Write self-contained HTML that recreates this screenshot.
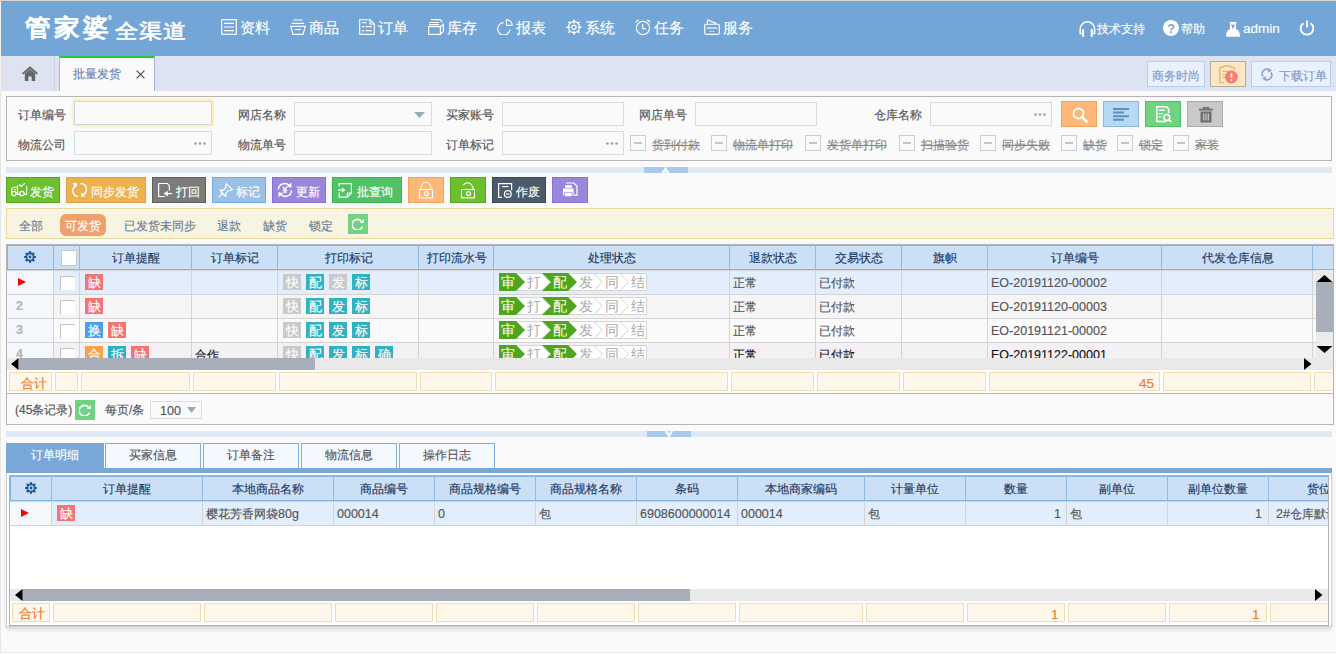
<!DOCTYPE html>
<html><head><meta charset="utf-8">
<style>
*{box-sizing:border-box}
html,body{margin:0;padding:0}
body{width:1336px;height:654px;overflow:hidden;position:relative;background:#fafafa;font-family:"Liberation Sans",sans-serif;font-size:12px;color:#555;-webkit-text-stroke-width:0.15px}
.a{position:absolute}
svg{display:block}
.t{position:absolute;white-space:nowrap;line-height:1}
/* header */
#hdr{left:0;top:0;width:1336px;height:56px;background:#73a6d7}
.nav{color:#fff;font-size:15px}
.hr{color:#fff;font-size:12px}
/* tabbar */
#tabbar{left:0;top:56px;width:1336px;height:35px;background:#dde3f0}
.rbtn{position:absolute;top:61px;height:26px;border:1px solid #b9cdf0;background:#e9f1fd;color:#7f98c9;font-size:12.5px}
/* search */
.box{position:absolute;border:1px solid #b5b5b5}
.lbl{position:absolute;font-size:12px;color:#555;line-height:1;white-space:nowrap}
.inp{position:absolute;height:24px;border:1px solid #d3dde2;background:#fafafa}
.dots{position:absolute;right:5px;top:10px;width:12px;height:3px}
.cb{position:absolute;width:16px;height:16px;border:1px solid #c4d0d4;background:#fafafa}
.cb:after{content:"";position:absolute;left:3px;top:6px;width:8px;height:2px;background:#bccacf}
.cbl{position:absolute;font-size:12px;color:#888;text-decoration:line-through;line-height:1;white-space:nowrap}
.sbtn{position:absolute;top:101px;width:36px;height:26px}
/* toolbar */
.tb{position:absolute;top:177px;height:26px;color:#fff;font-size:12.5px}
.tb .t{top:7px}

.hd{position:absolute;font-size:12px;color:#1f3b63;line-height:1;white-space:nowrap;text-align:center}
.tag{position:absolute;width:18px;height:16px;color:#fff;font-size:13px;line-height:17px;text-align:center;overflow:hidden}
.rcb{position:absolute;width:15px;height:14px;background:#fff;border-top:1px solid #c4c4c4;border-left:1px solid #c4c4c4}
.ct{position:absolute;font-size:12px;color:#555;line-height:1;white-space:nowrap}
.sc{position:absolute;height:19px;background:#fff7ea;border:1px solid #f0dbb2}
</style></head><body>
<!-- left viewport edge -->
<div class="a" style="left:0;top:56px;width:1px;height:598px;background:#e6e6e6"></div>
<div class="a" style="left:0;top:652px;width:1336px;height:1px;background:#e6e6e6"></div><div class="a" style="left:0;top:653px;width:1336px;height:1px;background:#fff"></div>

<!-- HEADER -->
<div id="hdr" class="a">
  <div class="t" style="left:25px;top:16px;font-size:25px;font-weight:bold;color:#fff;letter-spacing:4px;transform:scaleY(.94);transform-origin:0 0">管家婆</div>
  <div class="t" style="left:108px;top:16px;font-size:5px;color:#fff">®</div>
  <div class="t" style="left:115px;top:22px;font-size:23px;color:#fff;letter-spacing:1px;-webkit-text-stroke:0.7px #fff;transform:scaleY(.86);transform-origin:0 0">全渠道</div>
<svg class="a" style="left:221px;top:19px" width="16" height="16" viewBox="0 0 16 16"><g fill="none" stroke="#fff" stroke-width="1.15"><rect x="0.7" y="0.7" width="14.6" height="14.6"/><path d="M3 4.3H13M3 8H13M3 11.6H13"/></g></svg>
<div class="t nav" style="left:240px;top:20px">资料</div>
<svg class="a" style="left:290px;top:19px" width="16" height="16" viewBox="0 0 16 16"><g fill="none" stroke="#fff" stroke-width="1.15"><path d="M3.2 1H12.6M1.6 4.4H14.2"/><path d="M0.7 7.3H15.3L13 15.3H3Z"/><path d="M4.8 10.5H11"/></g></svg>
<div class="t nav" style="left:309px;top:20px">商品</div>
<svg class="a" style="left:359px;top:19px" width="16" height="16" viewBox="0 0 16 16"><g fill="none" stroke="#fff" stroke-width="1.15"><path d="M0.7 0.7H11L15.3 5V15.3H0.7Z"/><path d="M11 0.7V5H15.3"/><path d="M3 3.6H7.6M3 7.6H5.3M6.6 7.6H12.8M3 11.6H5.3M6.6 11.6H12.8"/></g></svg>
<div class="t nav" style="left:378px;top:20px">订单</div>
<svg class="a" style="left:428px;top:19px" width="16" height="16" viewBox="0 0 16 16"><g fill="none" stroke="#fff" stroke-width="1.2"><path d="M3 0.6H11.2Q13.8 0.6 13.8 3.6M1 3.5H11M1 5.6H11"/><path d="M0.6 7.6H12.4V15.4H0.6Z"/><path d="M12.4 7.6L15.4 5.4V12.2L12.4 15.4"/></g></svg>
<div class="t nav" style="left:447px;top:20px">库存</div>
<svg class="a" style="left:497px;top:19px" width="16" height="16" viewBox="0 0 16 16"><g fill="none" stroke="#fff" stroke-width="1.15"><path d="M6.5 3.6A6.2 6.2 0 1 0 13 10.4"/><path d="M9.5 0.9A5.4 5.4 0 0 1 15.2 6.4H9.5Z"/></g></svg>
<div class="t nav" style="left:516px;top:20px">报表</div>
<svg class="a" style="left:566px;top:19px" width="16" height="16" viewBox="0 0 16 16"><g fill="none" stroke="#fff" stroke-width="1.15"><circle cx="8" cy="8.2" r="5.6"/><circle cx="8" cy="8.2" r="2.1"/><path d="M8 0.6V4.4M8 12V15.8M0.4 8.2H4.2M11.8 8.2H15.6M2.5 2.7L4.3 4.5M11.7 11.9L13.5 13.7M13.5 2.7L11.7 4.5M4.3 11.9L2.5 13.7" stroke-width="1.5"/></g></svg>
<div class="t nav" style="left:585px;top:20px">系统</div>
<svg class="a" style="left:635px;top:19px" width="16" height="16" viewBox="0 0 16 16"><g fill="none" stroke="#fff" stroke-width="1.15"><circle cx="8" cy="9" r="6.6"/><path d="M7.7 5V9.6H11"/><path d="M0.8 3.6Q1.6 1.2 4 1.1M15.2 3.6Q14.4 1.2 12 1.1"/></g></svg>
<div class="t nav" style="left:654px;top:20px">任务</div>
<svg class="a" style="left:704px;top:19px" width="16" height="16" viewBox="0 0 16 16"><g fill="none" stroke="#fff" stroke-width="1.15"><rect x="0.7" y="5.2" width="14.6" height="10.1" rx="1.2"/><path d="M3.2 5.2L3.8 1L12.6 4.6"/><path d="M2.6 9H13.4"/><path d="M6.2 12.5H7.4M8.8 12.5H10"/></g></svg>
<div class="t nav" style="left:723px;top:20px">服务</div>
<svg class="a" style="left:1079px;top:20px" width="17" height="17" viewBox="0 0 17 17"><path d="M1.2 12.6V9A7.2 7.2 0 0 1 15.6 9V12.6" fill="none" stroke="#fff" stroke-width="1.5"/><path d="M1.2 11.6V13.7H3.4M15.6 11.6V13.7H13.4" fill="none" stroke="#fff" stroke-width="1.3"/><rect x="3" y="9.2" width="2.1" height="7.6" fill="#fff"/><rect x="11.7" y="9.2" width="2.1" height="7.6" fill="#fff"/></svg>
<div class="t hr" style="left:1097px;top:23px">技术支持</div>
<svg class="a" style="left:1163px;top:20px" width="16" height="16" viewBox="0 0 16 16"><circle cx="8" cy="8" r="8" fill="#fff"/><text x="8" y="12.6" text-anchor="middle" font-family="Liberation Sans" font-weight="bold" font-size="12.5" fill="#73a6d7">?</text></svg>
<div class="t hr" style="left:1181px;top:23px">帮助</div>
<svg class="a" style="left:1225px;top:21px" width="16" height="16" viewBox="0 0 16 16"><rect x="4.8" y="0.9" width="6.4" height="2.8" fill="#fff"/><path d="M1 15.8C1 11 2.6 9 5 8.2V3.6H6L8 8.4L10 3.6H11V8.2C13.4 9 15 11 15 15.8Z" fill="#fff"/></svg>
<div class="t" style="left:1243px;top:22px;color:#fff;font-size:13.5px">admin</div>
<svg class="a" style="left:1299px;top:20px" width="16" height="16" viewBox="0 0 16 16"><g fill="none" stroke="#fff" stroke-width="1.8"><path d="M4.4 3.2A6.3 6.3 0 1 0 11.6 3.2"/><path d="M8 0.5V7.5"/></g></svg>
</div>
<!-- TABBAR -->
<div id="tabbar" class="a">
  <svg class="a" style="left:22px;top:10px" width="16" height="15" viewBox="0 0 16 15"><path d="M8 0.3L16 7.3L14.7 8.6L8 2.8L1.3 8.6L0 7.3Z" fill="#666"/><path d="M2.8 7.6L8 3.2L13.2 7.6V15H9.6V10.6H6.4V15H2.8Z" fill="#666"/></svg>
  <div class="a" style="left:54px;top:0;width:1px;height:35px;background:#ccd2e0"></div>
  <div class="a" style="left:59px;top:0;width:96px;height:35px;background:#fafafa;border-left:1px solid #a3b6d9;border-right:1px solid #a3b6d9;border-top:2px solid #2bc53c"></div>
  <div class="t" style="left:73px;top:12px;color:#6b80b8;font-size:12px">批量发货</div>
  <svg class="a" style="left:136px;top:14px" width="9" height="9" viewBox="0 0 9 9"><path d="M0.6 0.6L8.4 8.4M8.4 0.6L0.6 8.4" stroke="#555" stroke-width="1.3"/></svg>
</div>
<div class="rbtn" style="left:1147px;width:58px"><div class="t" style="left:4px;top:8px;font-size:12px">商务时尚</div></div>
<div class="rbtn" style="left:1210px;width:36px;background:#fde6c2;border-color:#b0aba0">
  <svg class="a" style="left:8px;top:3px" width="20" height="19" viewBox="0 0 20 19"><g fill="none" stroke="#e3b56c" stroke-width="1.3"><path d="M5 2.2H2Q0.8 2.2 0.8 3.4V16.4Q0.8 17.6 2 17.6H5M11 2.2H14Q15.2 2.2 15.2 3.4V5"/><path d="M4 1H12M3.6 6.4H11M3.6 9.4H6M3.6 12.4H6"/></g><circle cx="12.4" cy="12" r="6.4" fill="#f77c6e"/><path d="M12.4 8.4V12.6" stroke="#fff" stroke-width="1.8"/><circle cx="12.4" cy="15" r="1" fill="#fff"/></svg>
</div>
<div class="rbtn" style="left:1251px;width:80px">
  <svg class="a" style="left:9px;top:6px" width="12" height="13" viewBox="0 0 12 13"><g fill="none" stroke="#8aa4d6" stroke-width="1.6"><path d="M2 8.5A4.6 4.6 0 0 1 8.5 2.2"/><path d="M10 4.5A4.6 4.6 0 0 1 3.5 10.8"/></g><path d="M7 0L11 2.6L7.4 4.8Z" fill="#8aa4d6"/><path d="M5 13L1 10.4L4.6 8.2Z" fill="#8aa4d6"/></svg>
  <div class="t" style="left:27px;top:8px;font-size:12px">下载订单</div>
</div>
<div class="a" style="left:0;top:0;width:1336px;height:1px;background:#d9d4ce"></div>
<div class="a" style="left:0;top:1px;width:1px;height:90px;background:#f3eee7"></div>
<!-- SEARCH -->
<div class="box" style="left:6px;top:96px;width:1326px;height:65px"></div>
<div class="lbl" style="left:18px;top:109px">订单编号</div>
<div class="lbl" style="left:238px;top:109px">网店名称</div>
<div class="lbl" style="left:446px;top:109px">买家账号</div>
<div class="lbl" style="left:639px;top:109px">网店单号</div>
<div class="lbl" style="left:874px;top:109px">仓库名称</div>
<div class="lbl" style="left:18px;top:139px">物流公司</div>
<div class="lbl" style="left:238px;top:139px">物流单号</div>
<div class="lbl" style="left:446px;top:139px">订单标记</div>
<div class="inp" style="left:74px;top:101px;width:138px;border-color:#cbd9e6;box-shadow:0 0 3px 1px #fde68a"></div>
<div class="inp" style="left:294px;top:102px;width:138px"><svg class="a" style="right:6px;top:9px" width="11" height="6" viewBox="0 0 11 6"><path d="M0 0H11L5.5 6Z" fill="#97adb5"/></svg></div>
<div class="inp" style="left:502px;top:102px;width:122px"></div>
<div class="inp" style="left:695px;top:102px;width:122px"></div>
<div class="inp" style="left:930px;top:102px;width:122px"><svg class="dots" viewBox="0 0 12 3"><circle cx="1.5" cy="1.5" r="1.3" fill="#8fa3ad"/><circle cx="6" cy="1.5" r="1.3" fill="#8fa3ad"/><circle cx="10.5" cy="1.5" r="1.3" fill="#8fa3ad"/></svg></div>
<div class="inp" style="left:74px;top:131px;width:138px"><svg class="dots" viewBox="0 0 12 3"><circle cx="1.5" cy="1.5" r="1.3" fill="#8fa3ad"/><circle cx="6" cy="1.5" r="1.3" fill="#8fa3ad"/><circle cx="10.5" cy="1.5" r="1.3" fill="#8fa3ad"/></svg></div>
<div class="inp" style="left:294px;top:131px;width:138px"></div>
<div class="inp" style="left:502px;top:131px;width:122px"><svg class="dots" viewBox="0 0 12 3"><circle cx="1.5" cy="1.5" r="1.3" fill="#8fa3ad"/><circle cx="6" cy="1.5" r="1.3" fill="#8fa3ad"/><circle cx="10.5" cy="1.5" r="1.3" fill="#8fa3ad"/></svg></div>
<div class="cb" style="left:630px;top:135px"></div><div class="cbl" style="left:652px;top:139px">货到付款</div>
<div class="cb" style="left:711px;top:135px"></div><div class="cbl" style="left:733px;top:139px">物流单打印</div>
<div class="cb" style="left:805px;top:135px"></div><div class="cbl" style="left:827px;top:139px">发货单打印</div>
<div class="cb" style="left:899px;top:135px"></div><div class="cbl" style="left:921px;top:139px">扫描验货</div>
<div class="cb" style="left:980px;top:135px"></div><div class="cbl" style="left:1002px;top:139px">同步失败</div>
<div class="cb" style="left:1061px;top:135px"></div><div class="cbl" style="left:1083px;top:139px">缺货</div>
<div class="cb" style="left:1117px;top:135px"></div><div class="cbl" style="left:1139px;top:139px">锁定</div>
<div class="cb" style="left:1173px;top:135px"></div><div class="cbl" style="left:1195px;top:139px">家装</div>
<div class="sbtn" style="left:1061px;background:#fdb878;border:1px solid #f2a35d"><svg class="a" style="left:10px;top:5px" width="16" height="16" viewBox="0 0 16 16"><circle cx="6.5" cy="6.5" r="5" fill="none" stroke="#fff" stroke-width="1.8"/><path d="M10 10L14.5 14.5" stroke="#fff" stroke-width="2.6" stroke-linecap="round"/></svg></div>
<div class="sbtn" style="left:1103px;background:#b9d8f3;border:1px solid #8db6de"><svg class="a" style="left:9px;top:6px" width="17" height="13" viewBox="0 0 17 13"><path d="M0 1H16M0 4.6H11M0 8.2H16M0 11.8H11" stroke="#5b8fc0" stroke-width="2"/></svg></div>
<div class="sbtn" style="left:1145px;background:#70d381;border:1px solid #4fbe62"><svg class="a" style="left:10px;top:4px" width="16" height="17" viewBox="0 0 16 17"><path d="M10.5 15.5H0.8V0.8H10.5L12.6 2.9V7" fill="none" stroke="#fff" stroke-width="1.6"/><path d="M3 4.3H8.8M3 7.6H7M3 10.9H5.4" stroke="#fff" stroke-width="1.4"/><circle cx="10.8" cy="11.5" r="2.9" fill="none" stroke="#fff" stroke-width="1.5"/><path d="M12.8 13.5L15.2 15.9" stroke="#fff" stroke-width="1.8"/></svg></div>
<div class="sbtn" style="left:1187px;background:#c9c9c9;border:1px solid #aaa"><svg class="a" style="left:11px;top:5px" width="14" height="16" viewBox="0 0 14 16"><path d="M0 2.6H14M4.5 2.6V0.8H9.5V2.6" fill="none" stroke="#6f6f6f" stroke-width="1.6"/><path d="M1.5 4.5H12.5V15.5H1.5Z" fill="#6f6f6f"/><path d="M4.7 6.5V13.5M7 6.5V13.5M9.3 6.5V13.5" stroke="#c9c9c9" stroke-width="1.2"/></svg></div>
<div class="a" style="left:6px;top:167px;width:1326px;height:6px;background:#e0eaf6"></div>
<div class="a" style="left:644px;top:167px;width:44px;height:6px;background:#abc9ef"><svg class="a" style="left:18px;top:0" width="7" height="6" viewBox="0 0 7 6"><path d="M0.8 6.2L3.5 2L6.2 6.2" fill="none" stroke="#fff" stroke-width="2.4"/></svg></div>
<!-- TOOLBAR -->
<div class="tb" style="left:6px;width:54px;background:#6cbf2f;border:1px solid #55a820"><svg class="a" style="left:4px;top:5px" width="17" height="15" viewBox="0 0 17 15"><g fill="none" stroke="#fff" stroke-width="1.15"><path d="M0.6 12.2V6.2L2.6 4.2H6.5"/><path d="M3.2 6.6H4.9"/><path d="M6.5 2.2V11"/><circle cx="2.9" cy="10.6" r="2.2"/><circle cx="11" cy="10.6" r="2.2"/><path d="M5 11.4H8.8M13.2 11.4H15.6V3"/><path d="M8.2 1.5L10.2 3.5L13.8 0.3"/></g></svg><div class="t" style="left:23px;top:8px;font-size:12px">发货</div></div>
<div class="tb" style="left:66px;width:80px;background:#eeb150;border:1px solid #e0a142"><svg class="a" style="left:5px;top:5px" width="15" height="15" viewBox="0 0 15 15"><g fill="none" stroke="#fff" stroke-width="1.5"><path d="M3.4 3A5.8 5.8 0 0 0 5.8 13.6"/><path d="M8.4 0.6A5.8 5.8 0 0 1 11.2 11.6"/></g><path d="M0.2 0.2L5 0L4.6 4.6Z" fill="#fff"/><path d="M9.2 9.5L9.2 13.8L13.6 13.6Z" fill="#fff"/></svg><div class="t" style="left:24px;top:8px;font-size:12px">同步发货</div></div>
<div class="tb" style="left:152px;width:54px;background:#7b7b7b;border:1px solid #5e5e5e"><svg class="a" style="left:4px;top:4px" width="16" height="16" viewBox="0 0 16 16"><g fill="none" stroke="#fff" stroke-width="1.2"><path d="M1.6 1.5H10.5L12.4 4.1V8.5"/><path d="M1.6 1.5V14.5H7.9"/><path d="M9.5 11.6H15"/></g><path d="M6.6 11.6L10.8 8.8V14.4Z" fill="#fff"/></svg><div class="t" style="left:23px;top:8px;font-size:12px">打回</div></div>
<div class="tb" style="left:212px;width:54px;background:#9cc0e4;border:1px solid #6eadea"><svg class="a" style="left:5px;top:5px" width="15" height="15" viewBox="0 0 15 15"><g fill="none" stroke="#fff" stroke-width="1.2"><path d="M0.6 14.4L5.4 9.6"/><path d="M8.4 0.8L14.2 6.6L12.6 7.4L10.2 7.6L7.6 10.6L8 13L4.2 10.8L2.4 7L4.6 7.6L7.6 5L7.8 2.6Z"/></g></svg><div class="t" style="left:23px;top:8px;font-size:12px">标记</div></div>
<div class="tb" style="left:272px;width:54px;background:#9b87d9;border:1px solid #8d6edb"><svg class="a" style="left:4px;top:4px" width="16" height="16" viewBox="0 0 16 16"><g fill="none" stroke="#fff" stroke-width="1.4"><path d="M1.4 7.6A6.3 6.3 0 0 1 12 3.2"/><path d="M14.5 8.2A6.3 6.3 0 0 1 3.8 12.6"/></g><path d="M9.6 4.6L14.4 0.6V5.8Z" fill="#fff"/><path d="M6.3 11.2L1.5 15.2V10Z" fill="#fff"/><g fill="none" stroke="#fff" stroke-width="1.2"><path d="M5.8 4.6L8 7.4L10.2 4.6M8 7.4V11.2M5.8 8.2H10.2M5.8 10H10.2"/></g></svg><div class="t" style="left:23px;top:8px;font-size:12px">更新</div></div>
<div class="tb" style="left:332px;width:70px;background:#52c266;border:1px solid #3fb054"><svg class="a" style="left:5px;top:5px" width="15" height="15" viewBox="0 0 15 15"><g fill="none" stroke="#fff" stroke-width="1.2"><path d="M1.2 3.5V0.6H13.4V10L9.4 14.2H1.2V9.5"/><path d="M13.4 10H9.4V14.2"/></g><path d="M0 7H4.8" stroke="#fff" stroke-width="1.3"/><path d="M7.4 7L4 4.6V9.4Z" fill="#fff"/></svg><div class="t" style="left:24px;top:8px;font-size:12px">批查询</div></div>
<div class="tb" style="left:408px;width:36px;background:#fdb879;border:1px solid #f2a35d"><svg class="a" style="left:9px;top:3px" width="17" height="18" viewBox="0 0 17 18"><g fill="none" stroke="#fff" stroke-width="1.1"><path d="M2.8 8.5C3.2 -1.2 12.8 -1.2 13.2 8.5"/><rect x="1.5" y="8.5" width="13" height="8.4"/><circle cx="8.5" cy="12.6" r="2"/></g></svg></div>
<div class="tb" style="left:450px;width:36px;background:#6cbf2f;border:1px solid #55a820"><svg class="a" style="left:9px;top:3px" width="17" height="18" viewBox="0 0 17 18"><g fill="none" stroke="#fff" stroke-width="1.1"><path d="M3.2 4.6C5.6 0.4 12 0.8 13.4 8.5"/><rect x="1.5" y="8.5" width="13" height="8.4"/><circle cx="8.5" cy="12.6" r="2"/></g></svg></div>
<div class="tb" style="left:492px;width:54px;background:#4b5b6b;border:1px solid #3b4855"><svg class="a" style="left:5px;top:5px" width="15" height="15" viewBox="0 0 15 15"><g fill="none" stroke="#fff" stroke-width="1.2"><path d="M4 14.4H0.6V0.6H13.6V7.4"/><path d="M4 3.6H10.6"/><circle cx="9.8" cy="11" r="3.4"/><path d="M8 11H11.6"/></g></svg><div class="t" style="left:23px;top:8px;font-size:12px">作废</div></div>
<div class="tb" style="left:552px;width:36px;background:#9b87d9;border:1px solid #8d6edb"><svg class="a" style="left:9px;top:3px" width="17" height="17" viewBox="0 0 17 17"><path d="M4 2H11.8L15 5V14.2H12" fill="none" stroke="#fff" stroke-width="1.2"/><rect x="3.2" y="4.2" width="6.6" height="2.6" fill="#fff"/><path d="M1 7.4H11.6V14.4H10.4V11H2.2V14.4H1Z" fill="#fff"/><rect x="3" y="11.6" width="6.6" height="3.6" fill="#fff"/></svg></div>
<!-- FILTER -->
<div class="a" style="left:6px;top:208px;width:1328px;height:31px;background:#f7f5e1;border:1px solid #e6d89f"></div>
<div class="t" style="left:19px;top:220px;font-size:12px;color:#6b7c95">全部</div>
<div class="t" style="left:124px;top:220px;font-size:12px;color:#6b7c95">已发货未同步</div>
<div class="t" style="left:217px;top:220px;font-size:12px;color:#6b7c95">退款</div>
<div class="t" style="left:263px;top:220px;font-size:12px;color:#6b7c95">缺货</div>
<div class="t" style="left:309px;top:220px;font-size:12px;color:#6b7c95">锁定</div>
<div class="a" style="left:60px;top:214px;width:46px;height:22px;border-radius:6px;background:#f0a06d"></div>
<div class="t" style="left:65px;top:220px;font-size:12px;color:#fff">可发货</div>
<div class="a" style="left:348px;top:214px;width:20px;height:20px;background:#70d381"><svg class="a" style="left:4px;top:4px" width="12" height="12" viewBox="0 0 12 12"><path d="M9.6 3.4A5.3 5.3 0 1 0 10.4 8.6" fill="none" stroke="#fff" stroke-width="1.6"/><path d="M7.8 4.9H11.9V0.9Z" fill="#fff"/></svg></div>
<!-- GRID -->
<div class="a" style="left:6px;top:244px;width:1328px;height:181px;border:1px solid #b5b5b5;background:#fafafa"></div>
<div class="a" style="left:7px;top:245px;width:1326px;height:25px;background:#cbdff6;border:1px solid #86b4e0;border-right:none"></div>
<div class="a" style="left:53px;top:245px;width:1px;height:24px;background:#8fbae3"></div>
<div class="a" style="left:79px;top:245px;width:1px;height:24px;background:#8fbae3"></div>
<div class="a" style="left:191px;top:245px;width:1px;height:24px;background:#8fbae3"></div>
<div class="a" style="left:277px;top:245px;width:1px;height:24px;background:#8fbae3"></div>
<div class="a" style="left:418px;top:245px;width:1px;height:24px;background:#8fbae3"></div>
<div class="a" style="left:493px;top:245px;width:1px;height:24px;background:#8fbae3"></div>
<div class="a" style="left:729px;top:245px;width:1px;height:24px;background:#8fbae3"></div>
<div class="a" style="left:815px;top:245px;width:1px;height:24px;background:#8fbae3"></div>
<div class="a" style="left:901px;top:245px;width:1px;height:24px;background:#8fbae3"></div>
<div class="a" style="left:987px;top:245px;width:1px;height:24px;background:#8fbae3"></div>
<div class="a" style="left:1161px;top:245px;width:1px;height:24px;background:#8fbae3"></div>
<div class="a" style="left:1312px;top:245px;width:1px;height:24px;background:#8fbae3"></div>
<div class="a" style="left:7px;top:270px;width:1309px;height:24px;background:#e2eefc"></div>
<div class="a" style="left:7px;top:270px;width:46px;height:24px;background:#f4f8fd"></div>
<div class="a" style="left:7px;top:294px;width:1309px;height:24px;background:#f5f5f5"></div>
<div class="a" style="left:7px;top:294px;width:46px;height:24px;background:#f4f8fd"></div>
<div class="a" style="left:7px;top:318px;width:1309px;height:24px;background:#fafafa"></div>
<div class="a" style="left:7px;top:318px;width:46px;height:24px;background:#f4f8fd"></div>
<div class="a" style="left:7px;top:342px;width:1309px;height:16px;background:#f5eff6"></div>
<div class="a" style="left:7px;top:342px;width:46px;height:16px;background:#f4f8fd"></div>
<div class="a" style="left:7px;top:270px;width:1309px;height:1px;background:#d3d3d3"></div>
<div class="a" style="left:7px;top:294px;width:1309px;height:1px;background:#d3d3d3"></div>
<div class="a" style="left:7px;top:318px;width:1309px;height:1px;background:#d3d3d3"></div>
<div class="a" style="left:7px;top:342px;width:1309px;height:1px;background:#d3d3d3"></div>
<div class="a" style="left:53px;top:270px;width:1px;height:88px;background:#d3d3d3"></div>
<div class="a" style="left:79px;top:270px;width:1px;height:88px;background:#d3d3d3"></div>
<div class="a" style="left:191px;top:270px;width:1px;height:88px;background:#d3d3d3"></div>
<div class="a" style="left:277px;top:270px;width:1px;height:88px;background:#d3d3d3"></div>
<div class="a" style="left:418px;top:270px;width:1px;height:88px;background:#d3d3d3"></div>
<div class="a" style="left:493px;top:270px;width:1px;height:88px;background:#d3d3d3"></div>
<div class="a" style="left:729px;top:270px;width:1px;height:88px;background:#d3d3d3"></div>
<div class="a" style="left:815px;top:270px;width:1px;height:88px;background:#d3d3d3"></div>
<div class="a" style="left:901px;top:270px;width:1px;height:88px;background:#d3d3d3"></div>
<div class="a" style="left:987px;top:270px;width:1px;height:88px;background:#d3d3d3"></div>
<div class="a" style="left:1161px;top:270px;width:1px;height:88px;background:#d3d3d3"></div>
<div class="a" style="left:1312px;top:270px;width:1px;height:88px;background:#d3d3d3"></div>
<div class="hd" style="left:80px;top:252px;width:112px">订单提醒</div>
<div class="hd" style="left:192px;top:252px;width:86px">订单标记</div>
<div class="hd" style="left:278px;top:252px;width:141px">打印标记</div>
<div class="hd" style="left:419px;top:252px;width:75px">打印流水号</div>
<div class="hd" style="left:494px;top:252px;width:236px">处理状态</div>
<div class="hd" style="left:730px;top:252px;width:86px">退款状态</div>
<div class="hd" style="left:816px;top:252px;width:86px">交易状态</div>
<div class="hd" style="left:902px;top:252px;width:86px">旗帜</div>
<div class="hd" style="left:988px;top:252px;width:174px">订单编号</div>
<div class="hd" style="left:1162px;top:252px;width:151px">代发仓库信息</div>
<svg class="a" style="left:24px;top:251px" width="12" height="12" viewBox="0 0 12 12"><g fill="#22568f"><circle cx="6" cy="6" r="4.2"/><circle cx="10.75" cy="6.00" r="1.25"/><circle cx="9.36" cy="9.36" r="1.25"/><circle cx="6.00" cy="10.75" r="1.25"/><circle cx="2.64" cy="9.36" r="1.25"/><circle cx="1.25" cy="6.00" r="1.25"/><circle cx="2.64" cy="2.64" r="1.25"/><circle cx="6.00" cy="1.25" r="1.25"/><circle cx="9.36" cy="2.64" r="1.25"/></g><circle cx="6" cy="6" r="2.7" fill="#cbdff6"/><circle cx="6" cy="6" r="1.4" fill="#22568f"/></svg>
<div class="a" style="left:61px;top:250px;width:16px;height:16px;background:#fff;border:1px solid #c9c9c9"></div>
<svg class="a" style="left:18px;top:278px" width="8" height="8" viewBox="0 0 8 8"><path d="M0 0L8 4L0 8Z" fill="#f00"/></svg>
<div class="t" style="left:16px;top:300px;font-size:12.5px;font-weight:bold;color:#b5b5b5">2</div>
<div class="t" style="left:16px;top:324px;font-size:12.5px;font-weight:bold;color:#b5b5b5">3</div>
<div class="t" style="left:16px;top:348px;font-size:12.5px;font-weight:bold;color:#b5b5b5">4</div>
<div class="rcb" style="left:60px;top:276px"></div>
<div class="rcb" style="left:60px;top:300px"></div>
<div class="rcb" style="left:60px;top:324px"></div>
<div class="rcb" style="left:60px;top:348px"></div>
<div class="tag" style="left:85px;top:274px;background:#f47474">缺</div>
<div class="tag" style="left:85px;top:298px;background:#f47474">缺</div>
<div class="tag" style="left:85px;top:322px;background:#4b9ff0">换</div>
<div class="tag" style="left:108px;top:322px;background:#f47474">缺</div>
<div class="tag" style="left:85px;top:346px;background:#f7a149">合</div>
<div class="tag" style="left:108px;top:346px;background:#2bb1c0">拆</div>
<div class="tag" style="left:131px;top:346px;background:#f47474">缺</div>
<div class="tag" style="left:283px;top:274px;background:#cacaca">快</div>
<div class="tag" style="left:306px;top:274px;background:#31b2c2">配</div>
<div class="tag" style="left:329px;top:274px;background:#cacaca">发</div>
<div class="tag" style="left:352px;top:274px;background:#31b2c2">标</div>
<div class="tag" style="left:283px;top:298px;background:#cacaca">快</div>
<div class="tag" style="left:306px;top:298px;background:#31b2c2">配</div>
<div class="tag" style="left:329px;top:298px;background:#31b2c2">发</div>
<div class="tag" style="left:352px;top:298px;background:#31b2c2">标</div>
<div class="tag" style="left:283px;top:322px;background:#cacaca">快</div>
<div class="tag" style="left:306px;top:322px;background:#31b2c2">配</div>
<div class="tag" style="left:329px;top:322px;background:#31b2c2">发</div>
<div class="tag" style="left:352px;top:322px;background:#31b2c2">标</div>
<div class="tag" style="left:283px;top:346px;background:#cacaca">快</div>
<div class="tag" style="left:306px;top:346px;background:#31b2c2">配</div>
<div class="tag" style="left:329px;top:346px;background:#31b2c2">发</div>
<div class="tag" style="left:352px;top:346px;background:#31b2c2">标</div>
<div class="tag" style="left:375px;top:346px;background:#31b2c2">确</div>
<svg class="a" style="left:499px;top:273px" width="148" height="18" viewBox="0 0 148 18"><rect x="0.5" y="0.5" width="147" height="17" fill="#fff" stroke="#d4d4d4"/><polygon points="0,0 17,0 26,9 17,18 0,18" fill="#4ea61e"/><path d="M43 0.5L51.5 9L43 17.5" fill="none" stroke="#d0d0d0"/><polygon points="43,0 69,0 78,9 69,18 43,18 52,9" fill="#4ea61e"/><path d="M95 0.5L103.5 9L95 17.5" fill="none" stroke="#d0d0d0"/><path d="M121 0.5L129.5 9L121 17.5" fill="none" stroke="#d0d0d0"/><text x="8.5" y="14.3" text-anchor="middle" font-size="13.5" fill="#fff">审</text><text x="34.5" y="14.3" text-anchor="middle" font-size="13.5" fill="#aaa">打</text><text x="60.5" y="14.3" text-anchor="middle" font-size="13.5" fill="#fff">配</text><text x="86.5" y="14.3" text-anchor="middle" font-size="13.5" fill="#aaa">发</text><text x="112.5" y="14.3" text-anchor="middle" font-size="13.5" fill="#aaa">同</text><text x="138.5" y="14.3" text-anchor="middle" font-size="13.5" fill="#aaa">结</text></svg>
<svg class="a" style="left:499px;top:297px" width="148" height="18" viewBox="0 0 148 18"><rect x="0.5" y="0.5" width="147" height="17" fill="#fff" stroke="#d4d4d4"/><polygon points="0,0 17,0 26,9 17,18 0,18" fill="#4ea61e"/><path d="M43 0.5L51.5 9L43 17.5" fill="none" stroke="#d0d0d0"/><polygon points="43,0 69,0 78,9 69,18 43,18 52,9" fill="#4ea61e"/><path d="M95 0.5L103.5 9L95 17.5" fill="none" stroke="#d0d0d0"/><path d="M121 0.5L129.5 9L121 17.5" fill="none" stroke="#d0d0d0"/><text x="8.5" y="14.3" text-anchor="middle" font-size="13.5" fill="#fff">审</text><text x="34.5" y="14.3" text-anchor="middle" font-size="13.5" fill="#aaa">打</text><text x="60.5" y="14.3" text-anchor="middle" font-size="13.5" fill="#fff">配</text><text x="86.5" y="14.3" text-anchor="middle" font-size="13.5" fill="#aaa">发</text><text x="112.5" y="14.3" text-anchor="middle" font-size="13.5" fill="#aaa">同</text><text x="138.5" y="14.3" text-anchor="middle" font-size="13.5" fill="#aaa">结</text></svg>
<svg class="a" style="left:499px;top:321px" width="148" height="18" viewBox="0 0 148 18"><rect x="0.5" y="0.5" width="147" height="17" fill="#fff" stroke="#d4d4d4"/><polygon points="0,0 17,0 26,9 17,18 0,18" fill="#4ea61e"/><path d="M43 0.5L51.5 9L43 17.5" fill="none" stroke="#d0d0d0"/><polygon points="43,0 69,0 78,9 69,18 43,18 52,9" fill="#4ea61e"/><path d="M95 0.5L103.5 9L95 17.5" fill="none" stroke="#d0d0d0"/><path d="M121 0.5L129.5 9L121 17.5" fill="none" stroke="#d0d0d0"/><text x="8.5" y="14.3" text-anchor="middle" font-size="13.5" fill="#fff">审</text><text x="34.5" y="14.3" text-anchor="middle" font-size="13.5" fill="#aaa">打</text><text x="60.5" y="14.3" text-anchor="middle" font-size="13.5" fill="#fff">配</text><text x="86.5" y="14.3" text-anchor="middle" font-size="13.5" fill="#aaa">发</text><text x="112.5" y="14.3" text-anchor="middle" font-size="13.5" fill="#aaa">同</text><text x="138.5" y="14.3" text-anchor="middle" font-size="13.5" fill="#aaa">结</text></svg>
<svg class="a" style="left:499px;top:345px" width="148" height="18" viewBox="0 0 148 18"><rect x="0.5" y="0.5" width="147" height="17" fill="#fff" stroke="#d4d4d4"/><polygon points="0,0 17,0 26,9 17,18 0,18" fill="#4ea61e"/><path d="M43 0.5L51.5 9L43 17.5" fill="none" stroke="#d0d0d0"/><polygon points="43,0 69,0 78,9 69,18 43,18 52,9" fill="#4ea61e"/><path d="M95 0.5L103.5 9L95 17.5" fill="none" stroke="#d0d0d0"/><path d="M121 0.5L129.5 9L121 17.5" fill="none" stroke="#d0d0d0"/><text x="8.5" y="14.3" text-anchor="middle" font-size="13.5" fill="#fff">审</text><text x="34.5" y="14.3" text-anchor="middle" font-size="13.5" fill="#aaa">打</text><text x="60.5" y="14.3" text-anchor="middle" font-size="13.5" fill="#fff">配</text><text x="86.5" y="14.3" text-anchor="middle" font-size="13.5" fill="#aaa">发</text><text x="112.5" y="14.3" text-anchor="middle" font-size="13.5" fill="#aaa">同</text><text x="138.5" y="14.3" text-anchor="middle" font-size="13.5" fill="#aaa">结</text></svg>
<div class="ct" style="left:733px;top:277px;color:#555">正常</div>
<div class="ct" style="left:819px;top:277px;color:#555">已付款</div>
<div class="t" style="left:991px;top:277px;font-size:12.5px;color:#555">EO-20191120-00002</div>
<div class="ct" style="left:733px;top:301px;color:#555">正常</div>
<div class="ct" style="left:819px;top:301px;color:#555">已付款</div>
<div class="t" style="left:991px;top:301px;font-size:12.5px;color:#555">EO-20191120-00003</div>
<div class="ct" style="left:733px;top:325px;color:#555">正常</div>
<div class="ct" style="left:819px;top:325px;color:#555">已付款</div>
<div class="t" style="left:991px;top:325px;font-size:12.5px;color:#555">EO-20191121-00002</div>
<div class="ct" style="left:733px;top:349px;color:#111">正常</div>
<div class="ct" style="left:819px;top:349px;color:#111">已付款</div>
<div class="t" style="left:991px;top:349px;font-size:12.5px;color:#111">EO-20191122-00001</div>
<div class="ct" style="left:195px;top:349px;color:#111">合作</div>
<div class="a" style="left:1316px;top:270px;width:17px;height:88px;background:#ebebeb"></div>
<div class="a" style="left:1316px;top:282px;width:17px;height:50px;background:#a8afbb"></div>
<svg class="a" style="left:1316px;top:275px" width="17" height="7" viewBox="0 0 17 7"><path d="M0.5 7L8.5 0L16.5 7Z" fill="#000"/></svg>
<svg class="a" style="left:1316px;top:346px" width="17" height="7" viewBox="0 0 17 7"><path d="M0.5 0L8.5 7L16.5 0Z" fill="#000"/></svg>
<div class="a" style="left:7px;top:358px;width:1326px;height:12px;background:#e9e9e9"></div>
<div class="a" style="left:19px;top:358px;width:296px;height:12px;background:#a8afbb"></div>
<svg class="a" style="left:11px;top:358px" width="8" height="12" viewBox="0 0 8 12"><path d="M0 6L7.5 0V12Z" fill="#000"/></svg>
<svg class="a" style="left:1304px;top:358px" width="8" height="12" viewBox="0 0 8 12"><path d="M0 0L7.5 6L0 12Z" fill="#000"/></svg>
<div class="a" style="left:7px;top:370px;width:1326px;height:23px;background:#fff"></div>
<div class="sc" style="left:9px;top:372px;width:43px"></div>
<div class="sc" style="left:55px;top:372px;width:23px"></div>
<div class="sc" style="left:81px;top:372px;width:109px"></div>
<div class="sc" style="left:193px;top:372px;width:83px"></div>
<div class="sc" style="left:279px;top:372px;width:138px"></div>
<div class="sc" style="left:420px;top:372px;width:72px"></div>
<div class="sc" style="left:495px;top:372px;width:233px"></div>
<div class="sc" style="left:731px;top:372px;width:83px"></div>
<div class="sc" style="left:817px;top:372px;width:83px"></div>
<div class="sc" style="left:903px;top:372px;width:83px"></div>
<div class="sc" style="left:989px;top:372px;width:171px"></div>
<div class="sc" style="left:1163px;top:372px;width:148px"></div>
<div class="sc" style="left:1314px;top:372px;width:19px;border-right:none"></div>
<div class="t" style="left:21px;top:378px;font-size:12.5px;color:#ea7a2e">合计</div>
<div class="t" style="left:1139px;top:377px;font-size:13.5px;color:#ea7a2e">45</div>
<div class="a" style="left:7px;top:393px;width:1326px;height:1px;background:#b5b5b5"></div>
<div class="t" style="left:15px;top:404px;font-size:12px;color:#555">(45条记录)</div>
<div class="a" style="left:75px;top:400px;width:20px;height:20px;background:#70d381"><svg class="a" style="left:4px;top:4px" width="12" height="12" viewBox="0 0 12 12"><path d="M9.6 3.4A5.3 5.3 0 1 0 10.4 8.6" fill="none" stroke="#fff" stroke-width="1.6"/><path d="M7.8 4.9H11.9V0.9Z" fill="#fff"/></svg></div>
<div class="t" style="left:105px;top:404px;font-size:12px;color:#555">每页/条</div>
<div class="a" style="left:150px;top:401px;width:52px;height:18px;border:1px solid #d3dde2;background:#fafafa"></div>
<div class="t" style="left:160px;top:405px;font-size:12.5px;color:#555">100</div>
<svg class="a" style="left:187px;top:407px" width="9" height="6" viewBox="0 0 9 6"><path d="M0 0H9L4.5 6Z" fill="#97adb5"/></svg>
<div class="a" style="left:6px;top:431px;width:1326px;height:6px;background:#e0eaf6"></div>
<div class="a" style="left:647px;top:431px;width:44px;height:6px;background:#abc9ef"><svg class="a" style="left:18px;top:0" width="8" height="6" viewBox="0 0 8 6"><path d="M0.8 0L4 4.6L7.2 0" fill="none" stroke="#fff" stroke-width="2.2"/></svg></div>
<!-- DETAIL -->
<div class="a" style="left:6px;top:443px;width:98px;height:25px;background:#78a7d8"></div>
<div class="hd" style="left:6px;top:449px;width:98px;color:#fff">订单明细</div>
<div class="a" style="left:105px;top:443px;width:96px;height:26px;background:#f4f9ff;border:1px solid #7aaee0;border-bottom:none"></div>
<div class="hd" style="left:105px;top:449px;width:96px;color:#555">买家信息</div>
<div class="a" style="left:203px;top:443px;width:96px;height:26px;background:#f4f9ff;border:1px solid #7aaee0;border-bottom:none"></div>
<div class="hd" style="left:203px;top:449px;width:96px;color:#555">订单备注</div>
<div class="a" style="left:301px;top:443px;width:96px;height:26px;background:#f4f9ff;border:1px solid #7aaee0;border-bottom:none"></div>
<div class="hd" style="left:301px;top:449px;width:96px;color:#555">物流信息</div>
<div class="a" style="left:399px;top:443px;width:96px;height:26px;background:#f4f9ff;border:1px solid #7aaee0;border-bottom:none"></div>
<div class="hd" style="left:399px;top:449px;width:96px;color:#555">操作日志</div>
<div class="a" style="left:6px;top:468px;width:1326px;height:5px;background:#78a7d8"></div>
<div class="a" style="left:6px;top:473px;width:1326px;height:154px;border:1px solid #d0d0d0;border-top:none;background:#fff;box-shadow:0 3px 4px rgba(0,0,0,0.12)"></div>
<div class="a" style="left:9px;top:475px;width:1320px;height:151px;border:1px solid #b0b0b0;background:#fff"></div>
<div class="a" style="left:10px;top:476px;width:1318px;height:25px;background:#cbdff6;border:1px solid #86b4e0;border-right:none"></div>
<div class="a" style="left:51px;top:476px;width:1px;height:24px;background:#8fbae3"></div>
<div class="a" style="left:202px;top:476px;width:1px;height:24px;background:#8fbae3"></div>
<div class="a" style="left:333px;top:476px;width:1px;height:24px;background:#8fbae3"></div>
<div class="a" style="left:434px;top:476px;width:1px;height:24px;background:#8fbae3"></div>
<div class="a" style="left:535px;top:476px;width:1px;height:24px;background:#8fbae3"></div>
<div class="a" style="left:636px;top:476px;width:1px;height:24px;background:#8fbae3"></div>
<div class="a" style="left:737px;top:476px;width:1px;height:24px;background:#8fbae3"></div>
<div class="a" style="left:864px;top:476px;width:1px;height:24px;background:#8fbae3"></div>
<div class="a" style="left:965px;top:476px;width:1px;height:24px;background:#8fbae3"></div>
<div class="a" style="left:1066px;top:476px;width:1px;height:24px;background:#8fbae3"></div>
<div class="a" style="left:1167px;top:476px;width:1px;height:24px;background:#8fbae3"></div>
<div class="a" style="left:1268px;top:476px;width:1px;height:24px;background:#8fbae3"></div>
<div class="a" style="left:10px;top:501px;width:1318px;height:25px;background:#e2eefc;border-bottom:1px solid #d3d3d3"></div>
<div class="a" style="left:10px;top:501px;width:41px;height:24px;background:#f4f8fd"></div>
<div class="a" style="left:10px;top:501px;width:1318px;height:1px;background:#d3d3d3"></div>
<div class="a" style="left:51px;top:501px;width:1px;height:24px;background:#d3d3d3"></div>
<div class="a" style="left:202px;top:501px;width:1px;height:24px;background:#d3d3d3"></div>
<div class="a" style="left:333px;top:501px;width:1px;height:24px;background:#d3d3d3"></div>
<div class="a" style="left:434px;top:501px;width:1px;height:24px;background:#d3d3d3"></div>
<div class="a" style="left:535px;top:501px;width:1px;height:24px;background:#d3d3d3"></div>
<div class="a" style="left:636px;top:501px;width:1px;height:24px;background:#d3d3d3"></div>
<div class="a" style="left:737px;top:501px;width:1px;height:24px;background:#d3d3d3"></div>
<div class="a" style="left:864px;top:501px;width:1px;height:24px;background:#d3d3d3"></div>
<div class="a" style="left:965px;top:501px;width:1px;height:24px;background:#d3d3d3"></div>
<div class="a" style="left:1066px;top:501px;width:1px;height:24px;background:#d3d3d3"></div>
<div class="a" style="left:1167px;top:501px;width:1px;height:24px;background:#d3d3d3"></div>
<div class="a" style="left:1268px;top:501px;width:1px;height:24px;background:#d3d3d3"></div>
<div class="a" style="left:0;top:0;width:0;height:0"></div>
<div class="a" style="left:10px;top:476px;width:1318px;height:50px;overflow:hidden"><div class="hd" style="left:41px;top:7px;width:151px">订单提醒</div><div class="hd" style="left:192px;top:7px;width:131px">本地商品名称</div><div class="hd" style="left:323px;top:7px;width:101px">商品编号</div><div class="hd" style="left:424px;top:7px;width:101px">商品规格编号</div><div class="hd" style="left:525px;top:7px;width:101px">商品规格名称</div><div class="hd" style="left:626px;top:7px;width:101px">条码</div><div class="hd" style="left:727px;top:7px;width:127px">本地商家编码</div><div class="hd" style="left:854px;top:7px;width:101px">计量单位</div><div class="hd" style="left:955px;top:7px;width:101px">数量</div><div class="hd" style="left:1056px;top:7px;width:101px">副单位</div><div class="hd" style="left:1157px;top:7px;width:101px">副单位数量</div><div class="hd" style="left:1258px;top:7px;width:101px">货位</div><div class="ct" style="left:196px;top:32px;font-size:12px">樱花芳香网袋<span style="font-size:12.5px">80g</span></div><div class="ct" style="left:327px;top:32px;font-size:12.5px">000014</div><div class="ct" style="left:428px;top:32px;font-size:12.5px">0</div><div class="ct" style="left:529px;top:32px;font-size:12px">包</div><div class="ct" style="left:630px;top:32px;font-size:12.5px">6908600000014</div><div class="ct" style="left:731px;top:32px;font-size:12.5px">000014</div><div class="ct" style="left:858px;top:32px;font-size:12px">包</div><div class="ct" style="left:1060px;top:32px;font-size:12px">包</div><div class="ct" style="left:1266px;top:32px;font-size:12px"><span style="font-size:12.5px">2#</span>仓库默认</div><div class="ct" style="left:1044px;top:32px;font-size:12.5px">1</div><div class="ct" style="left:1245px;top:32px;font-size:12.5px">1</div></div>
<svg class="a" style="left:25px;top:482px" width="12" height="12" viewBox="0 0 12 12"><g fill="#22568f"><circle cx="6" cy="6" r="4.2"/><circle cx="10.75" cy="6.00" r="1.25"/><circle cx="9.36" cy="9.36" r="1.25"/><circle cx="6.00" cy="10.75" r="1.25"/><circle cx="2.64" cy="9.36" r="1.25"/><circle cx="1.25" cy="6.00" r="1.25"/><circle cx="2.64" cy="2.64" r="1.25"/><circle cx="6.00" cy="1.25" r="1.25"/><circle cx="9.36" cy="2.64" r="1.25"/></g><circle cx="6" cy="6" r="2.7" fill="#cbdff6"/><circle cx="6" cy="6" r="1.4" fill="#22568f"/></svg>
<svg class="a" style="left:21px;top:509px" width="8" height="8" viewBox="0 0 8 8"><path d="M0 0L8 4L0 8Z" fill="#f00"/></svg>
<div class="tag" style="left:57px;top:505px;background:#f47474">缺</div>
<div class="a" style="left:10px;top:589px;width:1318px;height:12px;background:#e9e9e9"></div>
<div class="a" style="left:22px;top:589px;width:668px;height:12px;background:#a8afbb"></div>
<svg class="a" style="left:15px;top:589px" width="8" height="12" viewBox="0 0 8 12"><path d="M0 6L7.5 0V12Z" fill="#000"/></svg>
<svg class="a" style="left:1315px;top:589px" width="8" height="12" viewBox="0 0 8 12"><path d="M0 0L7.5 6L0 12Z" fill="#000"/></svg>
<div class="sc" style="left:12px;top:603px;width:38px"></div>
<div class="sc" style="left:53px;top:603px;width:148px"></div>
<div class="sc" style="left:204px;top:603px;width:128px"></div>
<div class="sc" style="left:335px;top:603px;width:98px"></div>
<div class="sc" style="left:436px;top:603px;width:98px"></div>
<div class="sc" style="left:537px;top:603px;width:98px"></div>
<div class="sc" style="left:638px;top:603px;width:98px"></div>
<div class="sc" style="left:739px;top:603px;width:124px"></div>
<div class="sc" style="left:866px;top:603px;width:98px"></div>
<div class="sc" style="left:967px;top:603px;width:98px"></div>
<div class="sc" style="left:1068px;top:603px;width:98px"></div>
<div class="sc" style="left:1169px;top:603px;width:98px"></div>
<div class="sc" style="left:1270px;top:603px;width:58px;border-right:none"></div>
<div class="t" style="left:19px;top:608px;font-size:12.5px;color:#ea7a2e">合计</div>
<div class="t" style="left:1051px;top:608px;font-size:13.5px;color:#ea7a2e">1</div>
<div class="t" style="left:1252px;top:608px;font-size:13.5px;color:#ea7a2e">1</div>
</body></html>
